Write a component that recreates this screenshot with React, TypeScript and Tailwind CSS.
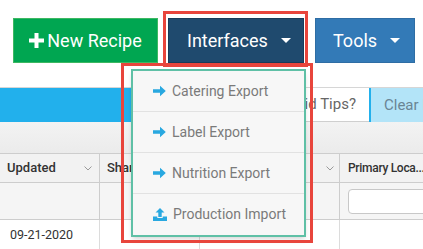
import React from 'react';

const Caret = () => (
  <svg width="10" height="5" viewBox="0 0 10 5" className="shrink-0">
    <path d="M0 0h10L5 5z" fill="currentColor" />
  </svg>
);

const Chevron = () => (
  <svg width="8" height="5" viewBox="0 0 8 5" className="shrink-0 text-[#9a9a9a]">
    <path d="M0.5 0.5L4 4l3.5-3.5" fill="none" stroke="currentColor" strokeWidth="1" />
  </svg>
);

const ArrowIcon = () => (
  <svg width="13" height="12" viewBox="0 0 13 12" className="shrink-0 text-[#29a8e0]">
    <path d="M0 4.3h7V0.8l5.8 5.2L7 11.2V7.7H0z" fill="currentColor" />
  </svg>
);

const UploadIcon = () => (
  <svg width="14" height="13" viewBox="0 0 14 13" className="shrink-0 text-[#29a8e0]">
    <path d="M7 0l4.5 4.5H8.7V9H5.3V4.5H2.5z" fill="currentColor" />
    <path d="M0 8.5h4.3v1.5h5.4V8.5H14V13H0z" fill="currentColor" />
  </svg>
);

const menuItems = [
  { label: 'Catering Export', icon: <ArrowIcon /> },
  { label: 'Label Export', icon: <ArrowIcon /> },
  { label: 'Nutrition Export', icon: <ArrowIcon /> },
  { label: 'Production Import', icon: <UploadIcon /> },
];

function App() {
  return (
    <div className="relative w-[423px] h-[249px] overflow-hidden bg-white font-['Roboto',sans-serif]">
      {/* top action buttons */}
      <div className="h-[87px] flex items-start pt-[18px] pl-[13px]">
        <button className="w-[145px] h-[45px] flex items-center justify-center gap-[3px] bg-[#00a651] border border-[#3db862] text-white text-[18px]">
          <svg width="15" height="15" viewBox="0 0 15 15" className="shrink-0">
            <path d="M5.5 0h4v5.5H15v4H9.5V15h-4V9.5H0v-4h5.5z" fill="white" />
          </svg>
          <span>New Recipe</span>
        </button>
        <button className="ml-[10px] w-[136px] h-[45px] flex items-center pl-[18px] gap-[13px] bg-[#1f4a6e] border border-[#183b59] text-white text-[18px]">
          <span>Interfaces</span>
          <Caret />
        </button>
        <button className="ml-[11px] w-[100px] h-[45px] flex items-center pl-[17px] gap-[13px] bg-[#337ab7] border border-[#2e6da4] text-white text-[18px]">
          <span>Tools</span>
          <Caret />
        </button>
      </div>

      {/* banner */}
      <div className="h-[35px] flex border-t border-[#d6d6d6]">
        <div className="w-[269px] shrink-0 bg-[#22b0ec]" />
        <div className="w-[100px] shrink-0 bg-white border-b border-[#cfcfcf] flex items-center justify-end pr-[13px] text-[15px] text-[#666] whitespace-nowrap">
          Grid Tips?
        </div>
        <div className="w-[90px] shrink-0 bg-[#b3e4f8] border-l-2 border-[#22b0ec] flex items-center pl-[13px] text-[15px] text-[#6a8594] whitespace-nowrap">
          Clear Filters
        </div>
      </div>

      {/* grid toolbar */}
      <div className="h-[32px] bg-gradient-to-b from-[#f3f3f3] to-[#ebebeb] border-b border-[#cdcdcd]" />

      {/* header row */}
      <div className="grid grid-cols-[100px_100px_140px_1fr] h-[29px] bg-[#f2f2f2] border-b border-[#cdcdcd] text-[13px] font-medium text-[#333]">
        <div className="border-r border-[#cdcdcd] flex items-center justify-between pl-[7px] pr-[7px]">
          <span>Updated</span>
          <Chevron />
        </div>
        <div className="border-r border-[#cdcdcd] flex items-center pl-[7px]">
          <span>Shared</span>
        </div>
        <div className="border-r border-[#cdcdcd] flex items-center justify-end pr-[5px]">
          <Chevron />
        </div>
        <div className="flex items-center pl-[8px] whitespace-nowrap text-[12px] tracking-[-0.3px]">Primary Loca...</div>
      </div>

      {/* filter row */}
      <div className="grid grid-cols-[100px_100px_140px_1fr] h-[37px] bg-[#f5f5f5] border-b border-[#cdcdcd]">
        <div className="border-r border-[#cdcdcd]" />
        <div className="border-r border-[#cdcdcd]" />
        <div className="border-r border-[#cdcdcd]" />
        <div className="flex items-center pl-[8px]">
          <div className="w-[100px] h-[25px] bg-white border border-[#c8c8c8] rounded-[4px]" />
        </div>
      </div>

      {/* data row */}
      <div className="grid grid-cols-[100px_100px_140px_1fr] h-[30px] bg-white text-[12.5px] text-[#333]">
        <div className="border-r border-[#dcdcdc] flex items-center pl-[10px]">09-21-2020</div>
        <div className="border-r border-[#dcdcdc]" />
        <div className="border-r border-[#dcdcdc]" />
        <div />
      </div>

      {/* dropdown menu */}
      <div className="absolute left-[131px] top-[69px] w-[175px] bg-[#f7f7f7] border-2 border-[#5fc0a6] shadow-md">
        {menuItems.map((item, i) => (
          <div
            key={item.label}
            className={`h-[41px] flex items-center gap-[6px] pl-[20px] text-[14px] text-[#7a7a7a] ${
              i < menuItems.length - 1 ? 'border-b border-[#e2e2e2]' : ''
            }`}
          >
            {item.icon}
            <span>{item.label}</span>
          </div>
        ))}
      </div>

      {/* annotation outlines */}
      <div className="absolute left-[163px] top-[11px] w-[145px] h-[56px] border-[3px] border-[#e8453c]" />
      <div className="absolute left-[121px] top-[63px] w-[192px] h-[180px] border-[3px] border-[#e8453c]" />
    </div>
  );
}

export default App;
